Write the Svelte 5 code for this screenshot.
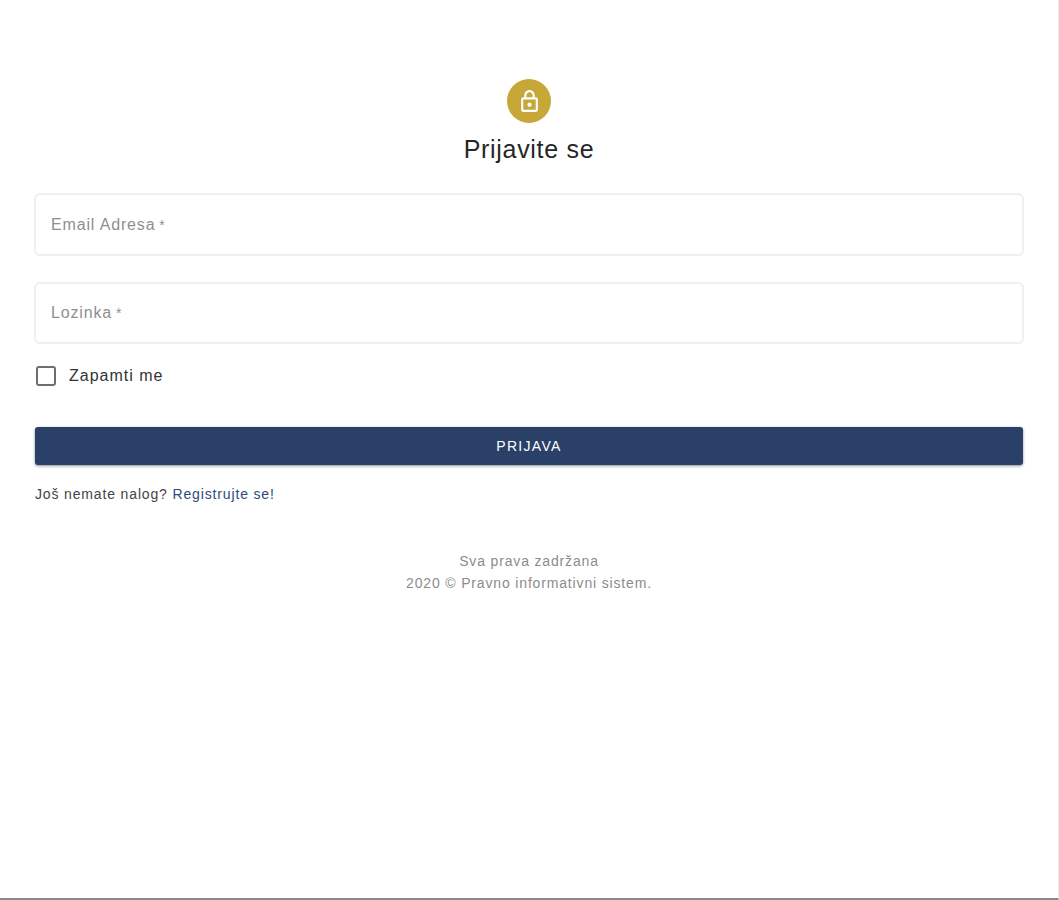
<script lang="ts">
  // Login page: lock avatar, two outlined fields, remember-me, submit, footer
  const fields = ['Email Adresa', 'Lozinka'];
</script>

<div class="page">
  <main class="login">
    <div class="avatar">
      <svg width="25" height="25" viewBox="0 0 24 24" fill="currentColor" aria-hidden="true">
        <path d="M18 8h-1V6c0-2.76-2.24-5-5-5S7 3.24 7 6v2H6c-1.1 0-2 .9-2 2v10c0 1.1.9 2 2 2h12c1.1 0 2-.9 2-2V10c0-1.1-.9-2-2-2zM9 6c0-1.66 1.34-3 3-3s3 1.34 3 3v2H9V6zm9 14H6V10h12v10zm-6-3c1.1 0 2-.9 2-2s-.9-2-2-2-2 .9-2 2 .9 2 2 2z" />
      </svg>
    </div>
    <h1>Prijavite se</h1>

    <form class="form">
      {#each fields as field}
        <div class="field">
          <span class="placeholder">{field}<span class="req">&nbsp;*</span></span>
        </div>
      {/each}

      <div class="remember">
        <span class="box"></span>
        <span>Zapamti me</span>
      </div>

      <button type="button" class="submit">PRIJAVA</button>

      <p class="signup">Još nemate nalog? <span class="link">Registrujte se!</span></p>
    </form>

    <footer class="foot">
      <div>Sva prava zadržana</div>
      <div>2020 © Pravno informativni sistem.</div>
    </footer>
  </main>
</div>

<style>
  :global(body) {
    background: #fff;
  }
  .page {
    box-sizing: border-box;
    height: 900px;
    border-right: 1px solid #ececec;
    border-bottom: 2px solid #8a8a8a;
    font-family: 'Liberation Sans', Arial, sans-serif;
    color: #2a2a2a;
    overflow: hidden;
  }
  .login {
    display: flex;
    flex-direction: column;
    align-items: center;
    padding: 79px 34px 0 34px;
  }
  .avatar {
    width: 44px;
    height: 44px;
    border-radius: 50%;
    background: #c6a738;
    color: #fff;
    display: flex;
    align-items: center;
    justify-content: center;
  }
  h1 {
    margin: 10px 0 0;
    font-size: 25px;
    font-weight: 400;
    line-height: 32px;
    letter-spacing: 0.7px;
    color: #262626;
  }
  .form {
    width: 100%;
    margin-top: 28px;
    display: flex;
    flex-direction: column;
  }
  .field {
    box-sizing: border-box;
    height: 63px;
    margin-bottom: 26px;
    padding: 0 15px;
    display: flex;
    align-items: center;
    border: 2px solid #efefef;
    border-radius: 6px;
  }
  .field + .field {
    height: 62px;
    margin-bottom: 0;
  }
  .placeholder {
    font-size: 16px;
    letter-spacing: 0.85px;
    color: #8f8f8f;
  }
  .req {
    font-size: 14px;
    letter-spacing: 0;
  }
  .remember {
    margin: 21px 0 0 2px;
    display: flex;
    align-items: center;
    gap: 13px;
    font-size: 16px;
    letter-spacing: 1px;
    height: 21px;
    color: #333;
  }
  .box {
    box-sizing: border-box;
    width: 20px;
    height: 20px;
    border: 2px solid #6e6e6e;
    border-radius: 3px;
  }
  .submit {
    margin: 41px 1px 0;
    height: 38px;
    border: none;
    border-radius: 3px;
    background: #2a4068;
    color: #fff;
    font: inherit;
    font-size: 14px;
    letter-spacing: 1.3px;
    box-shadow: 0 1px 3px rgba(0, 0, 0, 0.45);
  }
  .signup {
    margin: 21px 0 0 1px;
    font-size: 14px;
    line-height: 16px;
    letter-spacing: 0.85px;
    color: #444;
  }
  .link {
    color: #2c4a7c;
  }
  .foot {
    margin-top: 48px;
    text-align: center;
    font-size: 14px;
    line-height: 22px;
    color: #8c8c8c;
    letter-spacing: 0.84px;
  }
</style>
